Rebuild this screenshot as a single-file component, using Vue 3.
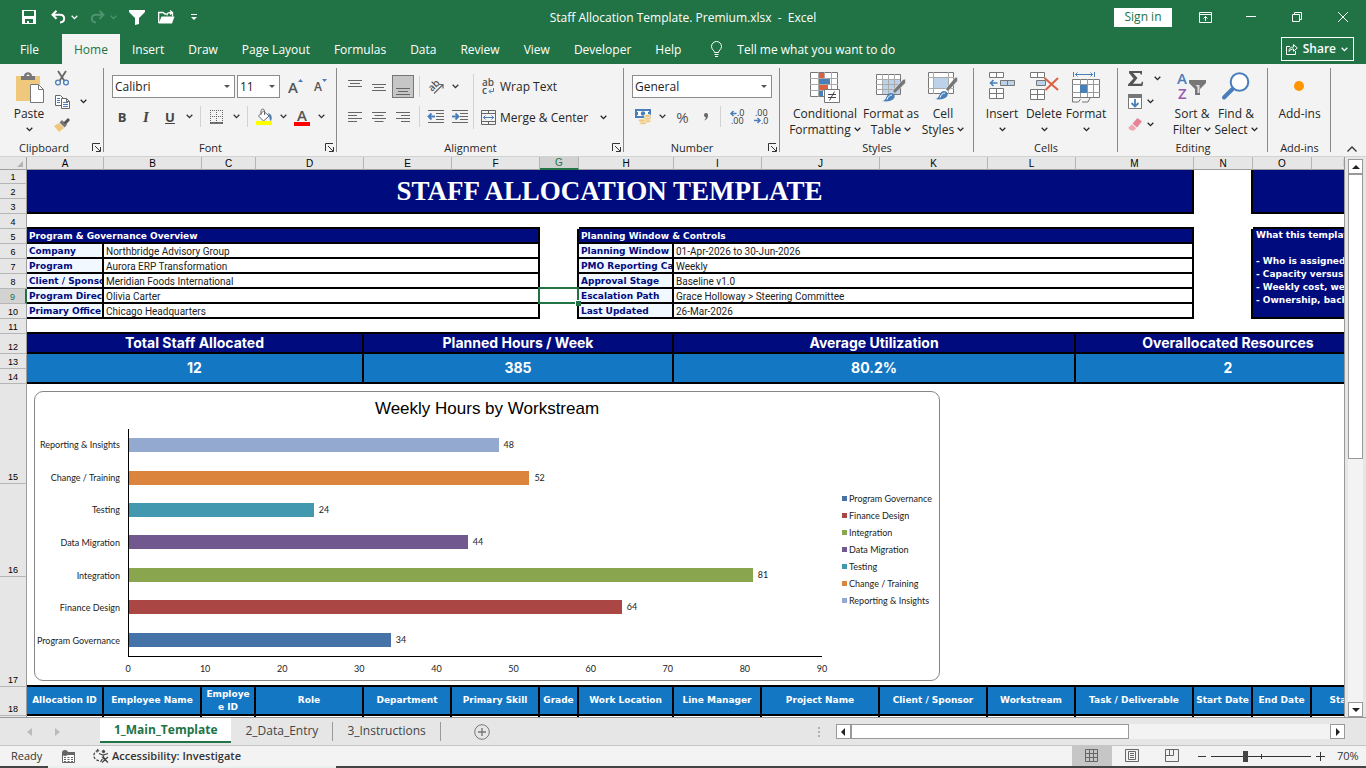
<script setup>
import { h, ref } from "vue";

const Chev = () =>
  h("svg", { class: "chev", viewBox: "0 0 7 5", "aria-hidden": "true" }, [
    h("path", { d: "M.7 .8 3.5 3.6 6.3 .8", fill: "none", stroke: "currentColor", "stroke-width": "1.3" }),
  ]);

const Launcher = () =>
  h("svg", { class: "launcher", viewBox: "0 0 9 9", "aria-hidden": "true" }, [
    h("path", { d: "M.5 8V.5H8M3 3l5 5M8.5 4v4.5H4", fill: "none", stroke: "#333" }),
  ]);

const tabs = ["File", "Home", "Insert", "Draw", "Page Layout", "Formulas", "Data", "Review", "View", "Developer", "Help"];
const activeTab = ref("Home");

const fontName = ref("Calibri");
const fontSize = ref("11");
const numberFormat = ref("General");
const zoom = ref(34);

const columns = [
  { name: "A", width: 77 },
  { name: "B", width: 98 },
  { name: "C", width: 54 },
  { name: "D", width: 108 },
  { name: "E", width: 88 },
  { name: "F", width: 88 },
  { name: "G", width: 39 },
  { name: "H", width: 95 },
  { name: "I", width: 88 },
  { name: "J", width: 118 },
  { name: "K", width: 108 },
  { name: "L", width: 88 },
  { name: "M", width: 118 },
  { name: "N", width: 59 },
  { name: "O", width: 59 },
  { name: "P", width: 70 },
];

const overview = [
  { row: 6, label: "Company", value: "Northbridge Advisory Group", label2: "Planning Window", value2: "01-Apr-2026 to 30-Jun-2026" },
  { row: 7, label: "Program", value: "Aurora ERP Transformation", label2: "PMO Reporting Cadence", value2: "Weekly" },
  { row: 8, label: "Client / Sponsor", value: "Meridian Foods International", label2: "Approval Stage", value2: "Baseline v1.0" },
  { row: 9, label: "Program Director", value: "Olivia Carter", label2: "Escalation Path", value2: "Grace Holloway > Steering Committee" },
  { row: 10, label: "Primary Office", value: "Chicago Headquarters", label2: "Last Updated", value2: "26-Mar-2026" },
];

const notes = [
  "What this template shows",
  "",
  "- Who is assigned to what",
  "- Capacity versus demand",
  "- Weekly cost, weekly hours",
  "- Ownership, backups",
];

const kpis = [
  { label: "Total Staff Allocated", value: "12" },
  { label: "Planned Hours / Week", value: "385" },
  { label: "Average Utilization", value: "80.2%" },
  { label: "Overallocated Resources", value: "2" },
];

const axisMax = 90;
const ticks = [0, 10, 20, 30, 40, 50, 60, 70, 80, 90];
const series = [
  { name: "Program Governance", hours: 34, color: "#4572a7" },
  { name: "Finance Design", hours: 64, color: "#aa4643" },
  { name: "Integration", hours: 81, color: "#89a54e" },
  { name: "Data Migration", hours: 44, color: "#71588f" },
  { name: "Testing", hours: 24, color: "#4198af" },
  { name: "Change / Training", hours: 52, color: "#db843d" },
  { name: "Reporting & Insights", hours: 48, color: "#93a9cf" },
];
const bars = [...series].reverse();

const headers = [
  "Allocation ID",
  "Employee Name",
  "Employe\ne ID",
  "Role",
  "Department",
  "Primary Skill",
  "Grade",
  "Work Location",
  "Line Manager",
  "Project Name",
  "Client / Sponsor",
  "Workstream",
  "Task / Deliverable",
  "Start Date",
  "End Date",
  "Status",
];
</script>

<template>
  <div class="excel">
    <header class="titlebar">
      <div class="quick">
        <button class="q q--save" aria-label="Save">
          <svg width="14" height="14" viewBox="0 0 14 14"><path d="M0 0h14v14H0z" fill="#fff" /><path d="M2 1h10v5H2zM3 9h8v4H3z" fill="#217346" /><path d="M5 11h2v2H5z" fill="#fff" /></svg>
        </button>
        <button class="q q--undo" aria-label="Undo">
          <svg width="15" height="14" viewBox="0 0 15 14" fill="none" stroke="#fff" stroke-width="2"><path d="M5.5.7 1.5 4.7l4 4M2 4.7h7c5.5 0 5.500 7.300 0 7.800" /></svg>
        </button>
        <button class="q q--arrow" aria-label="Undo list"><Chev /></button>
        <button class="q q--redo" aria-label="Redo">
          <svg width="15" height="14" viewBox="0 0 15 14" fill="none" stroke="#4f9270" stroke-width="2"><path d="M9.500.7l4 4-4 4M13 4.700H6C.5 4.700.5 12 6 12.500" /></svg>
        </button>
        <button class="q q--arrow q--dim" aria-label="Redo list"><Chev /></button>
        <button class="q q--filter" aria-label="Filter">
          <svg width="16" height="15" viewBox="0 0 16 15"><path d="M0 0h16v2L10 8v6l-4 1V8L0 2z" fill="#fff" /></svg>
        </button>
        <button class="q q--open" aria-label="Open">
          <svg width="17" height="14" viewBox="0 0 17 14"><path d="M.7 13V2.500h4.500l1.500 1.500h2" fill="none" stroke="#fff" stroke-width="1.300" /><path d="M3.500 6.500H16.500L14 13.500H.7z" fill="#fff" /><path d="M14.500 6.500V3M9 5.500c0-2.500 1-3 4.500-3M12 .5l2.500 2L12 4.500" fill="none" stroke="#fff" stroke-width="1.300" /></svg>
        </button>
        <button class="q q--more" aria-label="Customize Quick Access Toolbar">
          <svg width="6" height="7" viewBox="0 0 6 7"><path d="M0 0h6v1H0zM0 3h6L3 6z" fill="#fff" /></svg>
        </button>
      </div>
      <h1 class="doc">Staff Allocation Template. Premium.xlsx &nbsp;-&nbsp; Excel</h1>
      <div class="window">
        <button class="signin">Sign in</button>
        <button class="win" aria-label="Ribbon Display Options">
          <svg width="13" height="11" viewBox="0 0 13 11" fill="none" stroke="#fff"><path d="M.5.5h12v10H.5zM1 2.500h11M6.500 9V4.500M4.500 6.500l2-2 2 2" /></svg>
        </button>
        <button class="win" aria-label="Minimize">
          <svg width="10" height="10" viewBox="0 0 10 10"><path d="M0 4h10v1H0z" fill="#fff" /></svg>
        </button>
        <button class="win" aria-label="Restore">
          <svg width="10" height="10" viewBox="0 0 10 10" fill="none" stroke="#fff"><path d="M.5 2.500h7v7h-7zM2.500 2V.5h7v7H8" /></svg>
        </button>
        <button class="win" aria-label="Close">
          <svg width="10" height="10" viewBox="0 0 10 10" fill="none" stroke="#fff"><path d="M0 0l10 10M10 0 0 10" /></svg>
        </button>
      </div>
    </header>

    <nav class="tabs">
      <button
        v-for="tab in tabs"
        :key="tab"
        class="tab"
        :class="{ 'tab--active': tab === activeTab }"
        @click="activeTab = tab"
      >
        {{ tab }}
      </button>
      <button class="tell">
        <svg width="12" height="17" viewBox="0 0 12 17" fill="none" stroke="#fff"><path d="M3.500 11.500c0-2-3-3-3-6a5 5 0 0 1 10 0c0 3-3 4-3 6zM3.500 13.500h4M4 15.500h3" /></svg>
        Tell me what you want to do
      </button>
      <button class="share">
        <svg width="12" height="12" viewBox="0 0 12 12" fill="none" stroke="#fff"><path d="M4 3.500H.5v8h9V8M3 8.500c0-3 1.500-4.500 4.500-4.500V1.500L11.300 5 7.500 8.300V6C5.500 6 4 6.700 3 8.500z" /></svg>
        Share
        <Chev />
      </button>
    </nav>

    <section class="ribbon">
      <div class="group group--clipboard">
        <div class="body">
          <button class="big big--paste">
            <span class="art">
              <svg width="29" height="31" viewBox="0 0 29 31"><path d="M1 4h24v25H1z" fill="#f0c87c" /><path d="M6 8V4h3c0-5 8-5 8 0h3v4z" fill="#777" /><path d="M11.500 4a1.500 1.500 0 0 1 3 0z" fill="#fff" /><path d="M15 12h9l5 5v14H15z" fill="#fff" /><path d="M15.500 12.500h8l5 5v13h-13zM23.500 12.500v5h5" fill="none" stroke="#777" /></svg>
            </span>
            <span>Paste</span>
            <span><Chev /></span>
          </button>
          <div class="stack">
            <button class="small" aria-label="Cut">
              <svg width="14" height="15" viewBox="0 0 14 15" fill="none"><path d="M3 0l6.500 10M11 0 4.500 10" stroke="#666" stroke-width="1.800" /><circle cx="3" cy="11.500" r="2.400" stroke="#4a7ebb" stroke-width="1.300" /><circle cx="11" cy="11.500" r="2.400" stroke="#4a7ebb" stroke-width="1.300" /></svg>
            </button>
            <button class="small" aria-label="Copy">
              <svg width="15" height="14" viewBox="0 0 15 14"><path d="M.5.500h5l3 3v7h-8z" fill="#fff" stroke="#666" /><path d="M2 3.500h3M2 5.500h3M2 7.500h3" stroke="#4a7ebb" /><path d="M6.500 3.500h5l3 3v7h-8z" fill="#fff" stroke="#666" /><path d="M11.500 3.500v3h3" fill="none" stroke="#666" /><path d="M8 7.500h5M8 9.500h5M8 11.500h5" stroke="#4a7ebb" /></svg>
            </button>
            <button class="small" aria-label="Format Painter">
              <svg width="16" height="14" viewBox="0 0 16 14"><path d="M0 8l5-3 5 5-5 4z" fill="#efc77b" /><path d="M5.500 4.500 8 2l5 5-2.500 2.500z" fill="#777" /><path d="M9.500 4.500 14 0l2 2-4 4.500z" fill="#555" /></svg>
            </button>
          </div>
          <button class="drop" aria-label="Copy options"><Chev /></button>
        </div>
        <footer class="caption">Clipboard<Launcher /></footer>
      </div>

      <div class="group group--font">
        <div class="body body--rows">
          <div class="line">
            <label class="combo combo--font">
              <select v-model="fontName" aria-label="Font"><option>Calibri</option></select>
            </label>
            <label class="combo combo--size">
              <select v-model="fontSize" aria-label="Font Size"><option>11</option></select>
            </label>
            <button class="tool tool--grow" aria-label="Increase Font Size"><span class="letter">A</span><svg width="5" height="3" viewBox="0 0 5 3"><path d="M0 3h5L2.500 0z" fill="#4a7ebb" /></svg></button>
            <button class="tool tool--shrink" aria-label="Decrease Font Size"><span class="letter letter--s">A</span><svg width="5" height="3" viewBox="0 0 5 3"><path d="M0 0h5L2.500 3z" fill="#4a7ebb" /></svg></button>
          </div>
          <div class="line line--two">
            <button class="tool bold">B</button>
            <button class="tool italic">I</button>
            <button class="tool under">U</button>
            <button class="mini" aria-label="Underline options"><Chev /></button>
            <i class="bar"></i>
            <button class="tool" aria-label="Borders">
              <svg width="14" height="14" viewBox="0 0 14 14" fill="none" stroke="#666"><path d="M.5 0v13M6.500 0v13M12.500 0v13M0 .5h13M0 6.500h13" stroke-dasharray="1 1" /><path d="M0 13h13" stroke-width="1.500" stroke="#444" /></svg>
            </button>
            <button class="mini" aria-label="Border options"><Chev /></button>
            <i class="bar"></i>
            <button class="tool" aria-label="Fill Color">
              <svg width="17" height="16" viewBox="0 0 17 16"><path d="M7.500 2 13 7l-5.500 5L2.500 7z" fill="#fff" stroke="#666" /><path d="M5 6V2c0-2.500 3.500-2.500 3.500 0v4" fill="none" stroke="#666" /><path d="M12 4c4 1 4.500 5 3 8-2-1-1-4-3-8z" fill="#4a7ebb" /><path d="M0 12h16v4H0z" fill="#ff0" /></svg>
            </button>
            <button class="mini" aria-label="Fill options"><Chev /></button>
            <button class="tool tool--color" aria-label="Font Color"><span class="letter">A</span></button>
            <button class="mini" aria-label="Font color options"><Chev /></button>
          </div>
        </div>
        <footer class="caption">Font<Launcher /></footer>
      </div>

      <div class="group group--align">
        <div class="body">
          <div class="aligns">
            <div class="line">
              <button class="tool" aria-label="Top Align"><svg class="lines" viewBox="0 0 14 14"><path d="M0 .5h14M2 3.500h10M0 6.500h14" /></svg></button>
              <button class="tool" aria-label="Middle Align"><svg class="lines" viewBox="0 0 14 14"><path d="M0 4.500h14M2 7.500h10M0 10.500h14" /></svg></button>
              <button class="tool tool--on" aria-label="Bottom Align"><svg class="lines" viewBox="0 0 14 14"><path d="M0 8.500h14M2 11.500h10M0 14.500h14" /></svg></button>
              <i class="bar"></i>
              <button class="tool" aria-label="Orientation">
                <svg width="18" height="16" viewBox="0 0 18 16"><text transform="translate(5 13) rotate(-45)" class="glyph">ab</text><path d="M7 14.500 16 5.500M12 5.500h4v4" fill="none" stroke="#666" stroke-width="1.200" /></svg>
              </button>
              <button class="mini" aria-label="Orientation options"><Chev /></button>
            </div>
            <div class="line line--two">
              <button class="tool" aria-label="Align Left"><svg class="lines" viewBox="0 0 14 14"><path d="M0 2.500h14M0 5.500h9M0 8.500h14M0 11.500h9" /></svg></button>
              <button class="tool" aria-label="Center"><svg class="lines" viewBox="0 0 14 14"><path d="M0 2.500h14M2.500 5.500h9M0 8.500h14M2.500 11.500h9" /></svg></button>
              <button class="tool" aria-label="Align Right"><svg class="lines" viewBox="0 0 14 14"><path d="M0 2.500h14M5 5.500h9M0 8.500h14M5 11.500h9" /></svg></button>
              <i class="bar"></i>
              <button class="tool" aria-label="Decrease Indent">
                <svg width="16" height="14" viewBox="0 0 16 14" fill="none" stroke="#666"><path d="M0 .5h16M8 3.500h8M8 6.500h8M8 9.500h8M0 12.500h16" /><path d="M1 6.500h6M3.500 3.500l-3 3 3 3" stroke="#4a7ebb" stroke-width="1.800" /></svg>
              </button>
              <button class="tool" aria-label="Increase Indent">
                <svg width="16" height="14" viewBox="0 0 16 14" fill="none" stroke="#666"><path d="M0 .5h16M8 3.500h8M8 6.500h8M8 9.500h8M0 12.500h16" /><path d="M0 6.500h6M3.500 3.500l3 3-3 3" stroke="#4a7ebb" stroke-width="1.800" /></svg>
              </button>
            </div>
          </div>
          <i class="bar bar--tall"></i>
          <div class="wraps">
            <button class="wide">
              <svg width="15" height="16" viewBox="0 0 15 16"><text x="1" y="7" class="glyph">ab</text><text x="1" y="15" class="glyph">c</text><path d="M12.500 9v3.500H8.500M10 10.500l-2 2 2 2" fill="none" stroke="#4a7ebb" /></svg>
              Wrap Text
            </button>
            <button class="wide">
              <svg width="15" height="15" viewBox="0 0 15 15" fill="none" stroke="#666"><path d="M.5.5h14v14H.5zM.5 3.500h14M.5 11.500h14M7.500.5v3M7.500 11.500v3" /><path d="M2 7.500h11M4.500 5.500l-2 2 2 2M10.500 5.500l2 2-2 2" stroke="#4a7ebb" /></svg>
              Merge &amp; Center
              <Chev />
            </button>
          </div>
        </div>
        <footer class="caption">Alignment<Launcher /></footer>
      </div>

      <div class="group group--number">
        <div class="body body--rows">
          <div class="line">
            <label class="combo combo--number">
              <select v-model="numberFormat" aria-label="Number Format"><option>General</option></select>
            </label>
          </div>
          <div class="line line--two">
            <button class="tool" aria-label="Accounting Number Format">
              <svg width="17" height="16" viewBox="0 0 17 16"><path d="M0 0h16v9H0z" fill="#4a7ebb" /><path d="M2 2h12v5H2z" fill="#fff" /><path d="M0 3h3v3H0zM13 3h3v3h-3z" fill="#4a7ebb" /><circle cx="8" cy="4.500" r="2.200" fill="#4a7ebb" /><g fill="#f0c87c" stroke="#f3f3f3" stroke-width=".7"><ellipse cx="12.500" cy="12" rx="3.500" ry="1.700" /><ellipse cx="12.500" cy="9.500" rx="3.500" ry="1.700" /><ellipse cx="12.500" cy="7" rx="3.500" ry="1.700" /><ellipse cx="8" cy="14" rx="3.500" ry="1.700" /><ellipse cx="7" cy="11.500" rx="3.500" ry="1.700" /></g></svg>
            </button>
            <button class="mini" aria-label="Accounting options"><Chev /></button>
            <button class="tool percent">%</button>
            <button class="tool comma" aria-label="Comma Style">
              <svg width="6" height="8" viewBox="0 0 6 8"><path d="M1 2a2 2 0 1 1 4 0c0 3-1 4.500-4 5.500 1.200-1.200 1.800-2 1.800-3.300A2 2 0 0 1 1 2z" fill="#666" /></svg>
            </button>
            <i class="bar"></i>
            <button class="tool decimals" aria-label="Increase Decimal">
              <svg width="15" height="16" viewBox="0 0 15 16"><text x="7" y="7" class="digits">.0</text><text x="1" y="15" class="digits">.00</text><path d="M6.500 4.500H1M3.500 2l-2.500 2.500L3.500 7" fill="none" stroke="#4a7ebb" stroke-width="1.500" /></svg>
            </button>
            <button class="tool decimals" aria-label="Decrease Decimal">
              <svg width="15" height="16" viewBox="0 0 15 16"><text x="1" y="7" class="digits">.00</text><text x="7" y="15" class="digits">.0</text><path d="M0 11.500h6M3.500 9 6 11.500 3.500 14" fill="none" stroke="#4a7ebb" stroke-width="1.500" /></svg>
            </button>
          </div>
        </div>
        <footer class="caption">Number<Launcher /></footer>
      </div>

      <div class="group group--styles">
        <div class="body">
          <button class="big big--cond">
            <span class="art">
              <svg width="30" height="31" viewBox="0 0 30 31"><path d="M.5.500h27v24H.5z" fill="#fff" stroke="#777" /><path d="M8.500 0v25M14.500 0v25M21.500 0v25M0 6.500h28M0 12.500h28M0 18.500h28" stroke="#aaa" fill="none" /><path d="M9 1h5v5H9zM9 13h9v5H9z" fill="#dc6140" /><path d="M9 7h11v5H9zM9 19h4v5H9z" fill="#4a80b8" /><path d="M14.500 17.500h15v13h-15z" fill="#fff" stroke="#777" /><path d="M18 22.500h8M18 25.500h8M24.500 19.500l-5 9" stroke="#444" fill="none" /></svg>
            </span>
            <span>Conditional</span>
            <span>Formatting <Chev /></span>
          </button>
          <button class="big big--table">
            <span class="art">
              <svg width="30" height="30" viewBox="0 0 30 30"><path d="M.5 2.500h24v20H.5z" fill="#fff" stroke="#777" /><path d="M7 8h17v14H7z" fill="#bcd2ea" /><path d="M6.500 2v20M12.500 2v20M18.500 2v20M0 7.500h24M0 12.500h24M0 17.500h24" stroke="#aaa" fill="none" /><path d="M29.500 7v4L19 21.500 16.500 19 27 7.500z" fill="#777" stroke="#fff" stroke-width=".5" /><path d="M6 29c5 0 4-8 9-8 4 0 5 4 2 6.500-3 2-7 2.500-11 1.500z" fill="#4a80b8" /><path d="M11 27.500c1-3 3-4.500 5-4.500" stroke="#fff" fill="none" /></svg>
            </span>
            <span>Format as</span>
            <span>Table <Chev /></span>
          </button>
          <button class="big big--cell">
            <span class="art">
              <svg width="30" height="30" viewBox="0 0 30 30"><path d="M.5.500h25v21H.5z" fill="#fff" stroke="#777" /><path d="M5.500 0v22M20.500 0v22M0 5.500h26M0 16.500h26" stroke="#aaa" fill="none" /><path d="M6 6h14v10H6z" fill="#bcd2ea" /><path d="M29.500 5v4L20 19.500 17.500 17 27 5.500z" fill="#777" stroke="#fff" stroke-width=".5" /><path d="M7 27c5 0 4-8 9-8 4 0 5 4 2 6.500-3 2-7 2.500-11 1.500z" fill="#4a80b8" /><path d="M12 25.500c1-3 3-4.500 5-4.500" stroke="#fff" fill="none" /></svg>
            </span>
            <span>Cell</span>
            <span>Styles <Chev /></span>
          </button>
        </div>
        <footer class="caption">Styles</footer>
      </div>

      <div class="group group--cells">
        <div class="body">
          <button class="big big--c">
            <span class="art">
              <svg width="27" height="28" viewBox="0 0 27 28" stroke="#777" fill="#fff"><path d="M.5.500h14v5H.5zM7.500.5v5M.5 16.500h14v10H.5zM7.500 16.500v10M.5 21.500h14" /><path d="M11.500 8.500h14v5h-14z" fill="#bcd2ea" /><path d="M18.500 8.500v5" /><path d="M1.500 11h7M4.500 8l-3 3 3 3" fill="none" stroke="#4a80b8" stroke-width="1.600" /></svg>
            </span>
            <span>Insert</span>
            <span><Chev /></span>
          </button>
          <button class="big big--c">
            <span class="art">
              <svg width="29" height="28" viewBox="0 0 29 28" stroke="#777" fill="#fff"><path d="M.5.500h14v5H.5zM7.500.5v5M.5 17.500h14v10H.5zM7.500 17.500v10M.5 22.500h14" /><path d="M6.500 8.500h9v5h-9z" fill="#bcd2ea" /><path d="M14.500 6 28 18M28 6 15.500 18" stroke="#dc6140" stroke-width="2" fill="none" /></svg>
            </span>
            <span>Delete</span>
            <span><Chev /></span>
          </button>
          <button class="big big--c">
            <span class="art">
              <svg width="29" height="31" viewBox="0 0 29 31" fill="none"><path d="M1.500 0v5M22.500 0v5M3 2.500h18M5.500.5l-2 2 2 2M18.500.5l2 2-2 2" stroke="#4a80b8" /><path d="M.5 7.500h27v18H.5z" fill="#fff" stroke="#777" /><path d="M8.500 7v18M15.500 7v18M21.500 7v18M0 12.500h28M0 20.500h28" stroke="#999" /><path d="M8 13h7v8H8z" fill="#4a80b8" /><path d="M.5 26v4h6l2-3M10 30h6l2-4" stroke="#777" /></svg>
            </span>
            <span>Format</span>
            <span><Chev /></span>
          </button>
        </div>
        <footer class="caption">Cells</footer>
      </div>

      <div class="group group--editing">
        <div class="body">
          <div class="stack stack--edit">
            <button class="small small--sum" aria-label="AutoSum">
              <svg width="16" height="15" viewBox="0 0 16 15"><path d="M1 0h13v3.500h-1.200L12 2H5l4.500 5L5 12.700h8l1-2h1.200L14.500 15H0v-1.500L5.500 7.500 1 2z" fill="#555" /></svg>
              <Chev />
            </button>
            <button class="small" aria-label="Fill">
              <svg width="14" height="15" viewBox="0 0 14 15"><path d="M.5.500h13v14H.5z" fill="#fff" stroke="#777" /><path d="M0 0h14v4H0z" fill="#777" /><path d="M7 5v7.500M3.500 9 7 12.500 10.500 9" fill="none" stroke="#4a80b8" stroke-width="1.800" /></svg>
              <Chev />
            </button>
            <button class="small" aria-label="Clear">
              <svg width="14" height="13" viewBox="0 0 14 13"><path d="M4.500 5.500 9.500 0 14 3.500l-5 6z" fill="#e58497" /><path d="M4 6.200 8.300 10.200 6 12.500H3L0 10z" fill="#efa9b5" /></svg>
              <Chev />
            </button>
          </div>
          <button class="big big--sort">
            <span class="art">
              <svg width="30" height="30" viewBox="0 0 30 30"><text x="0" y="12" class="az az--a">A</text><text x="1" y="27" class="az az--z">Z</text><path d="M12 8h17v3l-6 6v6h-5v-6l-6-6z" fill="#777" /><path d="M18.500 13h4v8h-2v-6z" fill="#ddd" /></svg>
            </span>
            <span>Sort &amp;</span>
            <span>Filter <Chev /></span>
          </button>
          <button class="big big--find">
            <span class="art">
              <svg width="28" height="28" viewBox="0 0 28 28" fill="none" stroke="#4a7ebb"><circle cx="17.500" cy="10" r="8.800" fill="#fff" stroke-width="2" /><path d="M10.500 17 2 25.500" stroke-width="4" stroke-linecap="round" /></svg>
            </span>
            <span>Find &amp;</span>
            <span>Select <Chev /></span>
          </button>
        </div>
        <footer class="caption">Editing</footer>
      </div>

      <div class="group group--addins">
        <div class="body">
          <button class="big big--add">
            <span class="art">
              <svg width="12" height="30" viewBox="0 0 12 30"><circle cx="5" cy="14" r="5" fill="#ff9500" /></svg>
            </span>
            <span>Add-ins</span>
          </button>
        </div>
        <footer class="caption">Add-ins</footer>
      </div>
      <button class="collapse" aria-label="Collapse the Ribbon">
        <svg width="10" height="6" viewBox="0 0 10 6" fill="none" stroke="#333" stroke-width="1.300"><path d="M.5 5.500 5 1l4.500 4.500" /></svg>
      </button>
    </section>

    <main class="work">
      <div class="sheet">
        <table class="grid">
          <colgroup>
            <col class="col-head" />
            <col v-for="col in columns" :key="col.name" :style="{ width: col.width + 'px' }" />
            <col />
          </colgroup>
          <thead>
            <tr>
              <th class="corner"><svg width="6" height="6" viewBox="0 0 6 6"><path d="M6 0v6H0z" fill="#b4b4b4" /></svg></th>
              <th v-for="col in columns" :key="col.name" class="ch" :class="{ 'ch--on': col.name === 'G' }">{{ col.name }}</th>
              <th class="ch"></th>
            </tr>
          </thead>
          <tbody>
            <tr>
              <th class="rh rh--first">1</th>
              <td class="title bb br" colspan="13" rowspan="3">STAFF ALLOCATION TEMPLATE</td>
              <td class="br" rowspan="3"></td>
              <td class="navy bb" colspan="3" rowspan="3"></td>
            </tr>
            <tr><th class="rh">2</th></tr>
            <tr><th class="rh">3</th></tr>
            <tr>
              <th class="rh">4</th>
              <td class="bb" colspan="6"></td>
              <td></td>
              <td class="bb" colspan="6"></td>
              <td></td>
              <td class="bb" colspan="3"></td>
            </tr>
            <tr>
              <th class="rh">5</th>
              <td class="navy head bb br" colspan="6">Program &amp; Governance Overview</td>
              <td class="br"></td>
              <td class="navy head bb br" colspan="6">Planning Window &amp; Controls</td>
              <td class="br"></td>
              <td class="navy note bb" colspan="3" rowspan="6">
                <p v-for="(note, index) in notes" :key="index">{{ note }}</p>
              </td>
            </tr>
            <tr v-for="item in overview" :key="item.row">
              <th class="rh" :class="{ 'rh--on': item.row === 9 }">{{ item.row }}</th>
              <td class="label bb br">{{ item.label }}</td>
              <td class="value bb br" colspan="5">{{ item.value }}</td>
              <td class="br" :class="{ selected: item.row === 9 }"></td>
              <td class="label bb br">{{ item.label2 }}</td>
              <td class="value bb br" colspan="5">{{ item.value2 }}</td>
              <td class="br"></td>
            </tr>
            <tr>
              <th class="rh">11</th>
              <td class="bb" colspan="17"></td>
            </tr>
            <tr>
              <th class="rh rh--12">12</th>
              <td v-for="kpi in kpis" :key="kpi.label" class="navy kpi bb br" colspan="4">{{ kpi.label }}</td>
              <td class="navy bb"></td>
            </tr>
            <tr>
              <th class="rh">13</th>
              <td v-for="kpi in kpis" :key="kpi.label" class="blue kpi kpi--value bb br" colspan="4" rowspan="2">{{ kpi.value }}</td>
              <td class="blue bb" rowspan="2"></td>
            </tr>
            <tr><th class="rh">14</th></tr>
            <tr>
              <th class="rh rh--15">15</th>
              <td class="canvas bb" colspan="17" rowspan="3">
                <figure class="chart">
                  <figcaption>Weekly Hours by Workstream</figcaption>
                  <div class="chart-body">
                    <div class="names">
                      <span v-for="bar in bars" :key="bar.name">{{ bar.name }}</span>
                    </div>
                    <div class="plot">
                      <div class="bars">
                        <div v-for="bar in bars" :key="bar.name" class="bar-row">
                          <i :style="{ width: (bar.hours / axisMax) * 100 + '%', background: bar.color }"></i>
                          <b>{{ bar.hours }}</b>
                        </div>
                      </div>
                      <div class="ticks">
                        <span v-for="tick in ticks" :key="tick">{{ tick }}</span>
                      </div>
                    </div>
                    <ul class="legend">
                      <li v-for="item in series" :key="item.name"><i :style="{ background: item.color }"></i>{{ item.name }}</li>
                    </ul>
                  </div>
                </figure>
              </td>
            </tr>
            <tr><th class="rh rh--16">16</th></tr>
            <tr><th class="rh rh--17">17</th></tr>
            <tr>
              <th class="rh rh--18">18</th>
              <th v-for="header in headers" :key="header" class="blue field bb br">{{ header }}</th>
              <th class="blue bb"></th>
            </tr>
            <tr>
              <th class="rh"></th>
              <td v-for="header in headers" :key="header" class="br"></td>
              <td></td>
            </tr>
          </tbody>
        </table>
      </div>
      <div class="vscroll">
        <button aria-label="Scroll up"><svg width="8" height="4" viewBox="0 0 8 4"><path d="M0 4h8L4 0z" fill="#222" /></svg></button>
        <div class="vtrack"><i></i></div>
        <button aria-label="Scroll down"><svg width="8" height="4" viewBox="0 0 8 4"><path d="M0 0h8L4 4z" fill="#222" /></svg></button>
      </div>
    </main>

    <div class="sheets">
      <button class="step" aria-label="Previous sheet"><svg width="5" height="8" viewBox="0 0 5 8"><path d="M5 0v8L0 4z" fill="#bbb" /></svg></button>
      <button class="step" aria-label="Next sheet"><svg width="5" height="8" viewBox="0 0 5 8"><path d="M0 0v8l5-4z" fill="#bbb" /></svg></button>
      <button class="sheet-tab sheet-tab--active">1_Main_Template</button>
      <button class="sheet-tab">2_Data_Entry</button>
      <button class="sheet-tab">3_Instructions</button>
      <button class="add" aria-label="New sheet">
        <svg width="16" height="16" viewBox="0 0 16 16" fill="none" stroke="#777"><circle cx="8" cy="8" r="7.300" /><path d="M4 8h8M8 4v8" stroke-width="1.400" /></svg>
      </button>
      <svg class="grip" width="2" height="10" viewBox="0 0 2 10"><path d="M0 0h2v2H0zM0 4h2v2H0zM0 8h2v2H0z" fill="#b0b0b0" /></svg>
      <div class="hscroll">
        <button aria-label="Scroll left"><svg width="4" height="8" viewBox="0 0 4 8"><path d="M4 0v8L0 4z" fill="#222" /></svg></button>
        <div class="htrack"><i></i></div>
        <button aria-label="Scroll right"><svg width="4" height="8" viewBox="0 0 4 8"><path d="M0 0v8l4-4z" fill="#222" /></svg></button>
      </div>
    </div>

    <footer class="status">
      <span class="ready">Ready</span>
      <button class="macro" aria-label="Record Macro">
        <svg width="13" height="13" viewBox="0 0 13 13"><path d="M.5 2.500h12v10H.5z" fill="#fff" stroke="#666" /><path d="M4 2h9v3H4z" fill="#666" /><path d="M2 7.500h2M5.500 7.500h2M9 7.500h2M2 9.500h2M5.500 9.500h2M9 9.500h2M2 11.500h2M5.500 11.500h2M9 11.500h2" stroke="#666" /><circle cx="3" cy="3" r="3" fill="#666" /></svg>
      </button>
      <button class="access">
        <svg width="16" height="14" viewBox="0 0 16 14" fill="none" stroke="#444"><path d="M5 1.500a5 5 0 0 0 2 10" stroke-dasharray="2.500 1.500" stroke-width="1.300" /><path d="M4 0l2 1.500L4 3.500" /><circle cx="10.500" cy="2.500" r="1.200" fill="#444" /><path d="M6 4.500l4 1.500 5-1.500M10.500 6v2l-3 5M10.500 8l4 5M9 8l6 5.500M15 8l-6 5.500" stroke-width="1.200" /></svg>
        Accessibility: Investigate
      </button>
      <div class="views">
        <button class="view view--on" aria-label="Normal"><svg width="14" height="14" viewBox="0 0 14 14"><path d="M.5.5h12v12H.5zM4.500.5v12M8.500.5v12M.5 4.500h12M.5 8.500h12" /></svg></button>
        <button class="view" aria-label="Page Layout"><svg width="14" height="14" viewBox="0 0 14 14"><path d="M.5.5h13v12H.5zM3.500 2.500h7v8h-7zM5 4.500h4M5 6.500h4M5 8.500h4" /></svg></button>
        <button class="view" aria-label="Page Break Preview"><svg width="14" height="14" viewBox="0 0 14 14"><path d="M.5.5h13v12H.5zM4.500.5v6M8.500.5v6M.5 6.500h8" /></svg></button>
      </div>
      <button class="step-zoom" aria-label="Zoom Out"><svg width="9" height="9" viewBox="0 0 9 9"><path d="M0 4h8v1H0z" fill="#333" /></svg></button>
      <input v-model="zoom" class="zoom" type="range" min="0" max="100" aria-label="Zoom" />
      <button class="step-zoom" aria-label="Zoom In"><svg width="9" height="9" viewBox="0 0 9 9"><path d="M0 4h9v1H0zM4 0h1v9H4z" fill="#333" /></svg></button>
      <button class="percentage">70%</button>
    </footer>
    <div class="edge"><i></i><b></b><i></i></div>
  </div>
</template>

<style>
body {
  margin: 0;
  overflow: hidden;
}
svg {
  display: block;
  flex: none;
  overflow: visible;
}
.chev {
  width: 7px;
  height: 5px;
  display: inline-block;
  vertical-align: 2px;
}
.launcher {
  width: 9px;
  height: 9px;
}
</style>

<style scoped>
.excel {
  height: 100vh;
  display: flex;
  flex-direction: column;
  background: #e6e6e6;
  color: #262626;
  font-family: "Open Sans", "Noto Sans", sans-serif;
  font-size: 12px;
  line-height: 16px;
}
button {
  margin: 0;
  padding: 0;
  border: 0;
  background: none;
  color: inherit;
  font: inherit;
  white-space: nowrap;
}

/* title bar */
.titlebar {
  flex: none;
  height: 34px;
  display: grid;
  grid-template-columns: 1fr auto 1fr;
  align-items: center;
  background: #217346;
  color: #fff;
}
.quick {
  display: flex;
  align-items: center;
  padding-left: 22px;
}
.q {
  height: 20px;
  display: flex;
  align-items: center;
}
.q--save {
  width: 29px;
}
.q--undo,
.q--redo {
  width: 20px;
}
.q--arrow {
  width: 19px;
}
.q--dim {
  color: #4f9270;
}
.q--filter {
  width: 29px;
}
.q--open {
  width: 33px;
}
.doc {
  margin: 0;
  padding-top: 1px;
  font-size: 12px;
  font-weight: 400;
}
.window {
  display: flex;
  justify-content: flex-end;
  align-items: center;
  height: 34px;
}
.signin {
  width: 58px;
  height: 19px;
  margin-right: 10px;
  background: #fff;
  color: #217346;
}
.win {
  width: 46px;
  height: 30px;
  display: flex;
  align-items: center;
  justify-content: center;
}

/* ribbon tabs */
.tabs {
  flex: none;
  height: 30px;
  display: flex;
  align-items: stretch;
  padding: 0 12px 0 8px;
  background: #217346;
  color: #fff;
}
.tab {
  padding: 1px 12px 0;
}
.tab:first-child {
  padding-right: 23px;
}
.tab--active {
  background: #f3f3f3;
  color: #217346;
}
.tell {
  display: flex;
  align-items: center;
  gap: 14px;
  padding: 1px 16px 0 18px;
}
.share {
  align-self: center;
  height: 24px;
  margin: 0 0 0 auto;
  display: flex;
  align-items: center;
  gap: 5px;
  padding: 0 5px 0 4px;
  border: 1px solid #fff;
  font-weight: 600;
}

/* ribbon */
.ribbon {
  flex: none;
  height: 92px;
  display: flex;
  background: #f3f3f3;
  border-bottom: 1px solid #d2d2d2;
}
.group {
  flex: none;
  display: flex;
  flex-direction: column;
  position: relative;
}
.group::after {
  content: "";
  position: absolute;
  right: 0;
  top: 4px;
  bottom: 4px;
  width: 1px;
  background: #8a8a8a;
}
.group--clipboard {
  width: 104px;
}
.group--font {
  width: 233px;
}
.group--align {
  width: 287px;
}
.group--number {
  width: 156px;
}
.group--styles {
  width: 194px;
}
.group--cells {
  width: 144px;
}
.group--editing {
  width: 150px;
}
.group--addins {
  width: 63px;
}
.body {
  height: 75px;
  display: flex;
}
.body--rows {
  flex-direction: column;
}
.caption {
  height: 17px;
  display: flex;
  align-items: center;
  justify-content: center;
  font-size: 11px;
}
.group--clipboard .caption {
  padding-right: 16px;
}
.group--font .caption,
.group--align .caption,
.group--number .caption {
  padding-right: 20px;
}
.caption .launcher {
  position: absolute;
  right: 3px;
  bottom: 4px;
}
.big {
  display: flex;
  flex-direction: column;
  align-items: center;
}
.art {
  height: 42px;
  padding-top: 8px;
  box-sizing: border-box;
}
.big--paste {
  width: 38px;
  margin-left: 10px;
}
.stack {
  width: 28px;
  display: flex;
  flex-direction: column;
  padding-top: 3px;
}
.small {
  height: 23px;
  display: flex;
  align-items: center;
  justify-content: center;
}
.drop {
  width: 14px;
}
.line {
  height: 23px;
  display: flex;
  align-items: center;
  padding-top: 11px;
}
.line--two {
  padding-top: 7px;
}
.combo {
  position: relative;
  height: 23px;
}
.combo select {
  width: 100%;
  height: 23px;
  padding: 0 2px;
  box-sizing: border-box;
  appearance: none;
  border: 1px solid #8c8c8c;
  border-radius: 0;
  background: #fff;
  color: #222;
  font: inherit;
}
.combo::after {
  content: "";
  position: absolute;
  right: 5px;
  top: 10px;
  border: 3px solid transparent;
  border-top-color: #555;
  border-bottom: 0;
}
.combo--font {
  width: 123px;
  margin: 0 2px 0 8px;
}
.combo--size {
  width: 43px;
  margin-right: 3px;
}
.combo--number {
  width: 140px;
  margin-left: 8px;
}
.tool {
  width: 24px;
  height: 23px;
  box-sizing: border-box;
  display: flex;
  align-items: center;
  justify-content: center;
}
.tool--on {
  width: 22px;
  margin: 0 1px;
  border: 1px solid #777;
  background: #c6c6c6;
}
.tool--grow,
.tool--shrink {
  width: 25px;
  align-items: center;
}
.tool--grow svg,
.tool--shrink svg {
  align-self: flex-start;
  margin-top: 4px;
}
.letter {
  font-size: 15px;
  font-weight: 600;
  color: #555;
}
.letter--s {
  font-size: 12px;
}
.tool--color .letter {
  line-height: 13px;
  border-bottom: 4px solid #f00;
  padding: 0 3px;
  margin-top: 1px;
}
.mini {
  width: 14px;
  height: 23px;
  color: #333;
}
.bar {
  width: 1px;
  height: 21px;
  margin: 0 4px;
  background: #d2d2d2;
}
.bar--tall {
  height: 55px;
  margin: 10px 7px 0 0;
}
.group--font .line--two {
  padding-left: 6px;
}
.bold,
.italic,
.under {
  font-size: 13px;
  font-weight: 700;
  color: #444;
}
.italic {
  font-family: "Liberation Serif", serif;
  font-style: italic;
  font-size: 15px;
}
.under {
  text-decoration: underline;
}
.aligns {
  width: 136px;
  padding-left: 6px;
  box-sizing: border-box;
}
.lines {
  width: 14px;
  height: 14px;
  fill: none;
  stroke: #666;
}
.glyph {
  font: 600 10px "Open Sans", sans-serif;
  fill: #555;
}
.digits {
  font: 9px "Open Sans", sans-serif;
  fill: #333;
}
.wraps {
  display: flex;
  flex-direction: column;
  padding-top: 11px;
  gap: 8px;
}
.wide {
  height: 23px;
  display: flex;
  align-items: center;
  gap: 4px;
}
.wide .chev {
  margin-left: 8px;
}
.group--number .line--two {
  padding-left: 7px;
}
.percent {
  width: 27px;
  font-size: 15px;
  color: #555;
}
.comma {
  width: 20px;
}
.big--cond {
  width: 74px;
  margin-left: 8px;
}
.big--table {
  width: 58px;
}
.big--cell {
  width: 46px;
}
.big--c {
  width: 42px;
}
.group--cells .body {
  padding-left: 7px;
}
.stack--edit {
  width: 44px;
  padding-left: 10px;
}
.stack--edit .small {
  justify-content: flex-start;
  gap: 5px;
}
.stack--edit .small--sum {
  gap: 10px;
}
.big--sort {
  width: 40px;
}
.big--find {
  width: 48px;
}
.az {
  font: 600 15px "Open Sans", sans-serif;
}
.az--a {
  fill: #4a7ebb;
}
.az--z {
  fill: #9b59b6;
}
.big--add {
  width: 63px;
}
.collapse {
  margin: 0 9px 4px auto;
  align-self: flex-end;
}

/* worksheet */
.work {
  flex: 1;
  min-height: 0;
  display: flex;
}
.sheet {
  flex: 1;
  min-width: 0;
  overflow: hidden;
  border-right: 1px solid #999;
  background: #fff;
}
.grid {
  width: 100%;
  min-width: 1420px;
  table-layout: fixed;
  border-collapse: separate;
  border-spacing: 0;
  font-size: 9px;
  line-height: 11px;
}
.grid th,
.grid td {
  box-sizing: border-box;
  padding: 0;
  overflow: hidden;
  white-space: nowrap;
}
.col-head {
  width: 27px;
}
.corner {
  height: 13px;
  background: #e6e6e6;
  border-right: 1px solid #9e9e9e;
  border-bottom: 1px solid #9e9e9e;
}
.corner svg {
  margin: 2px 3px 0 auto;
}
.ch {
  height: 13px;
  background: #e6e6e6;
  border-right: 1px solid #b5b5b5;
  border-bottom: 1px solid #9e9e9e;
  color: #000;
  font: 10px/11px "Liberation Sans", sans-serif;
}
.ch--on {
  background: #d2d2d2;
  color: #217346;
  border-bottom: 2px solid #217346;
}
.rh {
  height: 15px;
  background: #e6e6e6;
  border-right: 1px solid #9e9e9e;
  border-bottom: 1px solid #b5b5b5;
  color: #000;
  font: 9px/11px "Liberation Sans", sans-serif;
  vertical-align: bottom;
}
.rh--first {
  height: 14px;
}
.rh--on {
  background: #d2d2d2;
  color: #217346;
  border-right: 2px solid #217346;
}
.rh--12 {
  height: 20px;
}
.rh--15 {
  height: 100px;
}
.rh--16 {
  height: 93px;
}
.rh--17 {
  height: 110px;
}
.rh--18 {
  height: 29px;
}
.bb {
  border-bottom: 2px solid #000;
}
.br {
  border-right: 2px solid #000;
}
.navy {
  background: #000b7e;
  color: #fff;
}
.blue {
  background: #1477c4;
  color: #fff;
}
.title {
  background: #000b7e;
  color: #fff;
  text-align: center;
  font: 700 27px/30px "Liberation Serif", serif;
}
.grid .head,
.grid .label,
.grid .note {
  padding-left: 2px;
  vertical-align: bottom;
  font: 700 9px/11px "DejaVu Sans", sans-serif;
}
.grid .label {
  background: #f2f8ff;
  color: #000b7e;
}
.grid .value {
  padding-left: 2px;
  vertical-align: bottom;
  background: #fff;
  color: #222;
  font: 10px/11px Roboto, sans-serif;
}
.grid .note {
  padding-left: 3px;
  vertical-align: top;
  line-height: 13px;
}
.note p {
  margin: 0;
  height: 13px;
}
.grid .selected {
  position: relative;
  overflow: visible;
}
.selected::before {
  content: "";
  position: absolute;
  inset: -2px -2px 0 -2px;
  border: 2px solid #217346;
}
.selected::after {
  content: "";
  position: absolute;
  right: -4px;
  bottom: -2px;
  width: 5px;
  height: 5px;
  background: #217346;
  border: 1px solid #fff;
  border-width: 1px 0 0 1px;
}
.kpi {
  text-align: center;
  font: 700 14px/18px Inter, sans-serif;
}
.kpi--value {
  padding-top: 1px;
}
.grid .field {
  font: 700 9px/13px "DejaVu Sans", sans-serif;
  white-space: pre;
}

/* chart */
.grid .canvas {
  padding: 7px 0 4px 7px;
  vertical-align: top;
}
.chart {
  width: 906px;
  height: 290px;
  margin: 0;
  box-sizing: border-box;
  border: 1px solid #868686;
  border-radius: 9px;
  background: #fff;
  color: #222;
  font: 9px/12px Lato, sans-serif;
}
.chart figcaption {
  padding: 7px 0 10px;
  text-align: center;
  color: #000;
  font: 17px/20px "Liberation Sans", sans-serif;
}
.chart-body {
  display: flex;
}
.names {
  width: 85px;
  height: 228px;
  display: flex;
  flex-direction: column;
}
.names span {
  flex: 1;
  display: flex;
  align-items: center;
  justify-content: flex-end;
}
.plot {
  flex: 1;
  margin-left: 8px;
}
.bars {
  height: 228px;
  box-sizing: border-box;
  display: flex;
  flex-direction: column;
  border-left: 1px solid #000;
  border-bottom: 1px solid #000;
}
.bar-row {
  flex: 1;
  display: flex;
  align-items: center;
  gap: 5px;
}
.bar-row i {
  height: 14px;
}
.bar-row b {
  font-weight: 400;
}
.ticks {
  display: flex;
  justify-content: space-between;
  margin: 6px -10px 0;
}
.ticks span {
  width: 20px;
  text-align: center;
}
.legend {
  width: 97px;
  margin: 61px 0 0 20px;
  padding: 0;
  list-style: none;
  line-height: 17px;
}
.legend li {
  display: flex;
  align-items: center;
  gap: 2px;
}
.legend i {
  width: 5px;
  height: 5px;
}

/* scrollbars */
.vscroll {
  width: 15px;
  padding: 2px 3px 0;
  display: flex;
  flex-direction: column;
}
.vscroll button,
.hscroll button {
  flex: none;
  width: 15px;
  height: 15px;
  box-sizing: border-box;
  display: flex;
  align-items: center;
  justify-content: center;
  border: 1px solid #999;
  background: #fff;
}
.vtrack {
  flex: 1;
  background: #f3f3f3;
}
.vtrack i {
  display: block;
  height: 54%;
  box-sizing: border-box;
  border: 1px solid #999;
  background: #fff;
}
.sheets {
  flex: none;
  height: 28px;
  display: flex;
  border-top: 1px solid #999;
  box-sizing: border-box;
}
.step {
  width: 28px;
  padding-left: 1px;
  display: flex;
  align-items: center;
  justify-content: center;
}
.step:first-child {
  margin-left: 15px;
}
.step:nth-child(2) {
  margin-right: 29px;
}
.sheet-tab {
  height: 25px;
  padding: 0 15px 0 14px;
  color: #444;
  position: relative;
}
.sheet-tab:not(.sheet-tab--active)::after {
  content: "";
  position: absolute;
  right: 0;
  top: 4px;
  bottom: 2px;
  width: 1px;
  background: #999;
}
.sheet-tab--active {
  padding: 0 14px;
  border-bottom: 2px solid #217346;
  background: #fff;
  color: #217346;
  font-weight: 700;
}
.add {
  padding: 0 33px;
}
.grip {
  align-self: center;
  margin: 0 16px 0 auto;
}
.hscroll {
  width: calc(37% + 4px);
  margin: 6px 21px 0 0;
  display: flex;
}
.htrack {
  flex: 1;
  height: 15px;
  background: #f3f3f3;
}
.htrack i {
  display: block;
  width: 58%;
  height: 15px;
  box-sizing: border-box;
  border: 1px solid #999;
  background: #fff;
}

/* status bar */
.status {
  flex: none;
  height: 21px;
  box-sizing: border-box;
  display: flex;
  align-items: center;
  border-top: 1px solid #c6c6c6;
  background: #f3f3f3;
  font-size: 11px;
  color: #333;
}
.ready {
  width: 51px;
  padding-left: 11px;
}
.macro {
  width: 31px;
}
.access {
  display: flex;
  align-items: center;
  gap: 3px;
  font-weight: 600;
}
.views {
  height: 20px;
  margin: 0 6px 0 auto;
  display: flex;
}
.view {
  width: 40px;
  display: flex;
  align-items: center;
  justify-content: center;
}
.view--on {
  background: #c6c6c6;
}
.view svg {
  fill: none;
  stroke: #666;
}
.step-zoom {
  width: 17px;
  display: flex;
  align-items: center;
}
.step-zoom svg {
  margin: 0 4px 0 0;
}
.zoom {
  width: 100px;
  height: 15px;
  margin: 0 5px 0 -4px;
  appearance: none;
  background:
    linear-gradient(#333, #333) 50px 5px / 1px 5px no-repeat,
    linear-gradient(#333, #333) 0 7px / 100px 1px no-repeat;
}
.zoom::-webkit-slider-thumb {
  appearance: none;
  width: 5px;
  height: 11px;
  background: #444;
}
.percentage {
  width: 33px;
  padding-left: 4px;
  text-align: left;
}
.edge {
  flex: none;
  height: 2px;
  display: flex;
  background: #444;
}
.edge i {
  width: 48px;
}
.edge b {
  width: 288px;
  background: #eaf0ef;
}
</style>
